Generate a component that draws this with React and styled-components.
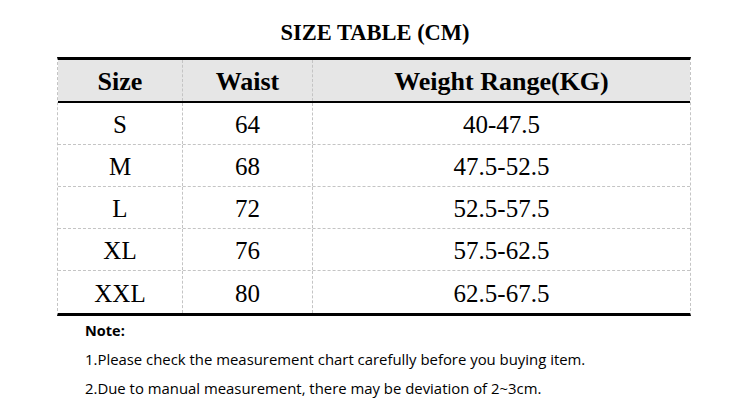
import React from 'react';
import styled, { createGlobalStyle } from 'styled-components';

const GlobalStyle = createGlobalStyle`
  html, body {
    margin: 0;
    padding: 0;
    background: #fff;
  }
`;

const Page = styled.div`
  width: 750px;
  height: 414px;
  overflow: hidden;
  background: #fff;
  font-family: "Liberation Serif", "Times New Roman", serif;
  color: #000;
`;

const Title = styled.h1`
  margin: 0;
  height: 57px;
  padding-top: 8px;
  box-sizing: border-box;
  display: flex;
  align-items: center;
  justify-content: center;
  font-size: 22.5px;
  font-weight: bold;
`;

const Table = styled.div`
  margin-left: 57px;
  width: 634px;
  border-top: 3px solid #000;
  border-bottom: 3px solid #000;
  border-left: 1px dashed #c4c4c4;
  border-right: 1px dashed #c4c4c4;
  box-sizing: border-box;
`;

const Row = styled.div`
  display: grid;
  grid-template-columns: 124px 130px 1fr;
  height: ${p => (p.$head ? '43px' : '42px')};
  box-sizing: border-box;
  background: ${p => (p.$head ? '#e6e6e6' : '#fff')};
  border-bottom: ${p => (p.$head ? '2px solid #000' : p.$last ? 'none' : '1px dashed #c4c4c4')};
  font-size: ${p => (p.$head ? '26px' : '25px')};
  font-weight: ${p => (p.$head ? 'bold' : 'normal')};
`;

const Cell = styled.div`
  display: flex;
  align-items: center;
  justify-content: center;
  border-left: ${p => (p.$first ? 'none' : '1px dashed #c4c4c4')};
  padding-top: 3px;
`;

const Notes = styled.div`
  padding-left: 85px;
  padding-top: 5px;
  font-family: "Comic Sans MS", "Open Sans", sans-serif;
  font-size: 14.9px;
  color: #000;
`;

const NoteHead = styled.div`
  font-weight: bold;
  font-size: 14.5px;
  line-height: 20px;
  margin-bottom: 4px;
`;

const NoteLine = styled.div`
  line-height: 29px;
`;

const rows = [
  ['S', '64', '40-47.5'],
  ['M', '68', '47.5-52.5'],
  ['L', '72', '52.5-57.5'],
  ['XL', '76', '57.5-62.5'],
  ['XXL', '80', '62.5-67.5'],
];

export default function App() {
  return (
    <Page>
      <GlobalStyle />
      <Title>SIZE TABLE (CM)</Title>
      <Table>
        <Row $head>
          <Cell $first>Size</Cell>
          <Cell>Waist</Cell>
          <Cell>Weight Range(KG)</Cell>
        </Row>
        {rows.map((r, i) => (
          <Row key={r[0]} $last={i === rows.length - 1}>
            <Cell $first>{r[0]}</Cell>
            <Cell>{r[1]}</Cell>
            <Cell>{r[2]}</Cell>
          </Row>
        ))}
      </Table>
      <Notes>
        <NoteHead>Note:</NoteHead>
        <NoteLine>1.Please check the measurement chart carefully before you buying item.</NoteLine>
        <NoteLine>2.Due to manual measurement, there may be deviation of 2~3cm.</NoteLine>
      </Notes>
    </Page>
  );
}
